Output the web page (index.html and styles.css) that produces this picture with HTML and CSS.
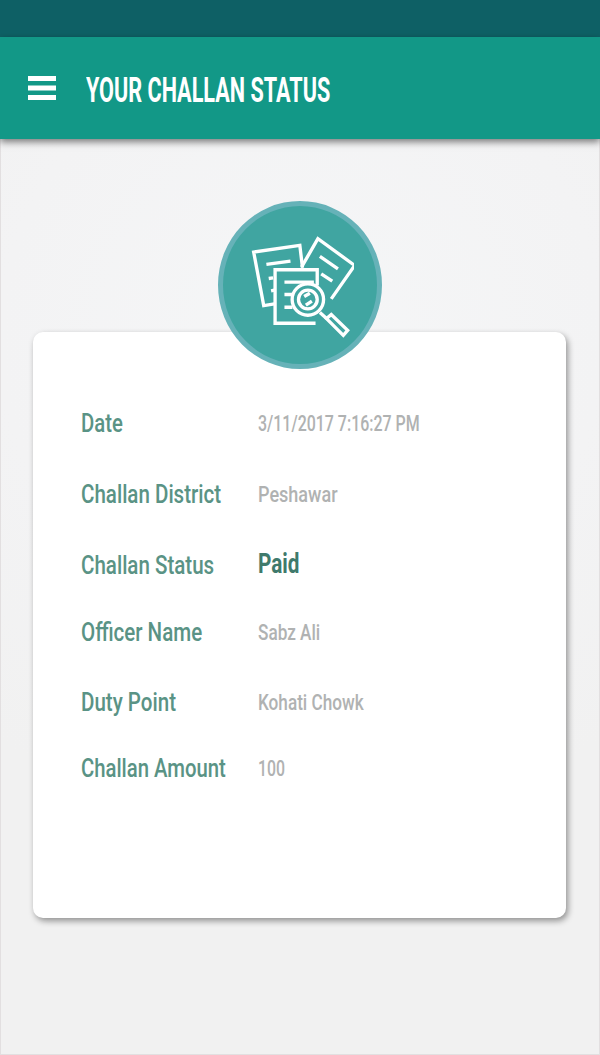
FILE: index.html
```html
<!DOCTYPE html>
<html lang="en">
<head>
<meta charset="utf-8">
<title>Your Challan Status</title>
<link rel="stylesheet" href="styles.css">
</head>
<body>
<div class="status-bar"></div>
<header class="app-bar">
  <svg class="menu-icon" viewBox="0 0 28 24" aria-hidden="true"><path d="M0 2.500H28M0 12H28M0 21.500H28"/></svg>
  <h1 class="title">YOUR CHALLAN STATUS</h1>
</header>
<main class="content">
  <div class="badge">
    <svg class="badge-icon" viewBox="140 125 320 320" aria-hidden="true">
      <path d="M222 340L190 345L160 185L298 165L306 232"/>
      <path d="M198 222L270 212M205 264L218 262M212 301L222 299"/>
      <path d="M303 230L352 145L462 225L392 325"/>
      <path d="M358 198L412 235M362 250L395 272"/>
      <path d="M350 285V238H224V398H345"/>
      <path d="M252 275H340M252 312H276M252 350H276"/>
      <circle cx="322" cy="327" r="47"/>
      <circle cx="322" cy="327" r="28"/>
      <path d="M311 318L328 308M316 344L334 332"/>
      <path d="M358 366L378 384"/>
      <path d="M378 384L392 372L441 419L428 434Z"/>
    </svg>
  </div>
  <section class="card">
    <div class="row row-date"><span class="label label-date">Date</span><span class="value value-date">3/11/2017 7:16:27 PM</span></div>
    <div class="row row-district"><span class="label label-district">Challan District</span><span class="value value-district">Peshawar</span></div>
    <div class="row row-status"><span class="label">Challan Status</span><span class="value-paid">Paid</span></div>
    <div class="row row-officer"><span class="label">Officer Name</span><span class="value">Sabz Ali</span></div>
    <div class="row row-point"><span class="label">Duty Point</span><span class="value">Kohati Chowk</span></div>
    <div class="row row-amount"><span class="label label-amount">Challan Amount</span><span class="value value-amount">100</span></div>
  </section>
</main>
</body>
</html>
```
FILE: styles.css
```css
* { box-sizing: border-box; }
html, body { margin: 0; height: 100%; }
body {
  width: 600px;
  height: 1055px;
  overflow: hidden;
  display: flex;
  flex-direction: column;
  background: #f1f1f1;
  font-family: Roboto, "Liberation Sans", sans-serif;
}
.status-bar { height: 37px; background: #0e6065; flex: none; }
.app-bar {
  height: 102px;
  flex: none;
  display: flex;
  align-items: center;
  gap: 30px;
  padding-left: 28px;
  background: #129887;
  box-shadow: 0 3px 7px rgba(0, 0, 0, .5);
  position: relative;
}
.menu-icon { width: 28px; height: 24px; flex: none; }
.menu-icon path { stroke: #fff; stroke-width: 5; fill: none; }
.title {
  margin: 4px 0 0;
  font-size: 35px;
  font-weight: 700;
  color: #fff;
  line-height: 1;
  white-space: nowrap;
  transform: scaleX(.618);
  transform-origin: left center;
}
.content {
  flex: 1;
  display: flex;
  flex-direction: column;
  align-items: center;
  border: solid #e2dfe0;
  border-width: 0 1px 1px;
  background: radial-gradient(circle at 300px 200px, #f5f6f7 0, #f3f3f4 300px, #f1f1f1 500px);
}
.badge {
  width: 164px;
  height: 168px;
  margin-top: 62px;
  margin-bottom: -37px;
  flex: none;
  z-index: 1;
  border-radius: 50%;
  border: 5px solid #66b2b8;
  background: #40a5a1;
  display: flex;
  align-items: center;
  justify-content: center;
}
.badge-icon { width: 107px; height: 107px; flex: none; }
.badge-icon path, .badge-icon circle { fill: none; stroke: #fff; stroke-width: 10; stroke-linejoin: miter; }
.card {
  width: 533px;
  height: 586px;
  margin-right: 1px;
  flex: none;
  padding: 56px 48px 0;
  display: flex;
  flex-direction: column;
  background: #fff;
  border-radius: 10px;
  box-shadow: 2px 3px 6px rgba(0, 0, 0, .4);
}
.row { display: flex; align-items: center; flex: none; }
.row-date { height: 70px; }
.row-district { height: 71px; }
.row-status { height: 71px; }
.row-officer { height: 64px; }
.row-point { height: 76px; }
.row-amount { height: 56px; }
.label, .value, .value-paid { display: inline-block; white-space: nowrap; transform-origin: left center; }
.label { width: 177px; flex: none; font-size: 26px; font-weight: 500; color: #5a9385; transform: scaleX(.79); }
.label-date { transform: scaleX(.78); }
.label-district { transform: scaleX(.79); }
.label-amount { transform: scaleX(.78); }
.value { font-size: 22px; font-weight: 500; color: #b0b2b2; transform: scaleX(.78); }
.value-date { transform: scaleX(.725); }
.value-district { margin-top: 2px; transform: scaleX(.82); }
.value-amount { transform: scaleX(.72); }
.value-paid { margin-bottom: 3px; font-size: 28px; font-weight: 700; color: #3f7a6c; transform: scaleX(.74); }
```
